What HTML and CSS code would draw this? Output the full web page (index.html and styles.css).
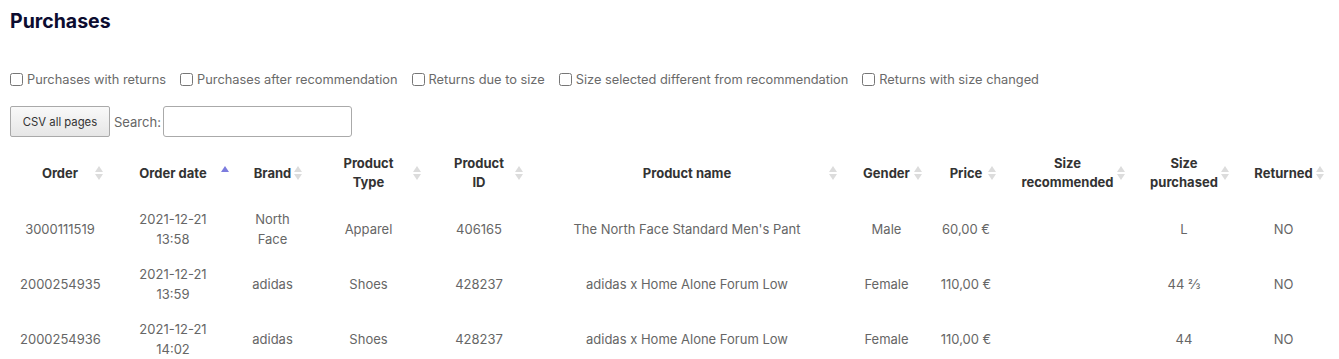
FILE: index.html
```html
<!DOCTYPE html>
<html>
<head>
<meta charset="utf-8">
<link rel="stylesheet" href="styles.css">
</head>
<body>
<div class="page">
  <h1 class="title">Purchases</h1>
  <div class="filters">
    <label class="filter"><input type="checkbox">Purchases with returns</label>
    <label class="filter"><input type="checkbox">Purchases after recommendation</label>
    <label class="filter"><input type="checkbox">Returns due to size</label>
    <label class="filter"><input type="checkbox">Size selected different from recommendation</label>
    <label class="filter"><input type="checkbox">Returns with size changed</label>
  </div>
  <div class="toolbar">
    <button class="btn">CSV all pages</button>
    <label class="search">Search:<input type="text" class="search-input"></label>
  </div>
  <table class="grid">
    <colgroup>
      <col class="c1"><col class="c2"><col class="c3"><col class="c4"><col class="c5"><col class="c6"><col class="c7"><col class="c8"><col class="c9"><col class="c10"><col class="c11">
    </colgroup>
    <thead>
      <tr>
        <th><span class="label">Order</span><span class="sort"></span></th>
        <th><span class="label">Order date</span><span class="sort asc"></span></th>
        <th><span class="label">Brand</span><span class="sort"></span></th>
        <th><span class="label">Product<br>Type</span><span class="sort"></span></th>
        <th><span class="label">Product<br>ID</span><span class="sort"></span></th>
        <th><span class="label">Product name</span><span class="sort"></span></th>
        <th><span class="label">Gender</span><span class="sort"></span></th>
        <th><span class="label">Price</span><span class="sort"></span></th>
        <th><span class="label">Size<br>recommended</span><span class="sort"></span></th>
        <th><span class="label">Size<br>purchased</span><span class="sort"></span></th>
        <th><span class="label">Returned</span><span class="sort"></span></th>
      </tr>
    </thead>
    <tbody>
      <tr>
        <td>3000111519</td><td>2021-12-21<br>13:58</td><td>North<br>Face</td><td>Apparel</td><td>406165</td><td>The North Face Standard Men's Pant</td><td>Male</td><td>60,00 €</td><td></td><td>L</td><td>NO</td>
      </tr>
      <tr>
        <td>2000254935</td><td>2021-12-21<br>13:59</td><td>adidas</td><td>Shoes</td><td>428237</td><td>adidas x Home Alone Forum Low</td><td>Female</td><td>110,00 €</td><td></td><td>44 ⅔</td><td>NO</td>
      </tr>
      <tr>
        <td>2000254936</td><td>2021-12-21<br>14:02</td><td>adidas</td><td>Shoes</td><td>428237</td><td>adidas x Home Alone Forum Low</td><td>Female</td><td>110,00 €</td><td></td><td>44</td><td>NO</td>
      </tr>
    </tbody>
  </table>
</div>
</body>
</html>
```

FILE: styles.css
```css
html, body {
  margin: 0;
  padding: 0;
  background: #fff;
}
body {
  font-family: Inter, "Noto Sans", sans-serif;
  font-size: 13px;
  color: #666;
}
.page {
  padding: 8px 8px 0 10px;
}
.title {
  margin: 0;
  font-size: 19.5px;
  font-weight: 700;
  color: #0c0c30;
  line-height: 26px;
}
.filters {
  display: flex;
  align-items: center;
  margin-top: 35px;
  gap: 14px;
  height: 20px;
}
.filter {
  display: flex;
  align-items: center;
  color: #6a6a6a;
  font-size: 12.8px;
  white-space: pre;
}
.filter input {
  margin: 0 4px 0 0;
  width: 13px;
  height: 13px;
}
.toolbar {
  display: flex;
  align-items: center;
  margin-top: 17px;
}
.btn {
  font-family: Inter, "Noto Sans", sans-serif;
  font-size: 11.3px;
  color: #333;
  height: 31px;
  width: 100px;
  padding: 0;
  border: 1px solid #a9a9a9;
  border-radius: 2px;
  background: linear-gradient(#f9f9f9, #e6e6e6);
}
.search {
  display: flex;
  align-items: center;
  margin-left: 4px;
  color: #666;
}
.search-input {
  margin-left: 2px;
  width: 189px;
  height: 31px;
  box-sizing: border-box;
  border: 1px solid #aaa;
  border-radius: 3px;
}
.grid {
  margin-top: 7px;
  border-collapse: collapse;
  table-layout: fixed;
  width: 1321px;
}
.c1 { width: 100px; }
.c2 { width: 126px; }
.c3 { width: 73px; }
.c4 { width: 119px; }
.c5 { width: 102px; }
.c6 { width: 314px; }
.c7 { width: 85px; }
.c8 { width: 74px; }
.c9 { width: 129px; }
.c10 { width: 104px; }
.c11 { width: 95px; }
.grid th {
  position: relative;
  padding: 10px 10px;
  text-align: center;
  font-weight: 700;
  color: #333;
  line-height: 19px;
  height: 38px;
}
.grid td {
  padding: 8px 10px;
  text-align: center;
  line-height: 19.5px;
  height: 39px;
  color: #666;
}
.sort {
  position: absolute;
  right: 6px;
  top: 50%;
  width: 9px;
  height: 14px;
  margin-top: -7px;
}
.sort::before,
.sort::after {
  content: "";
  position: absolute;
  left: 0;
  border-left: 4.5px solid transparent;
  border-right: 4.5px solid transparent;
}
.sort::before {
  top: 0;
  border-bottom: 6px solid #dcdcdc;
}
.sort::after {
  bottom: 0;
  border-top: 6px solid #dcdcdc;
}
.sort.asc::before {
  top: 0;
  border-bottom-color: #7c7cde;
}
.sort.asc::after {
  display: none;
}
```
